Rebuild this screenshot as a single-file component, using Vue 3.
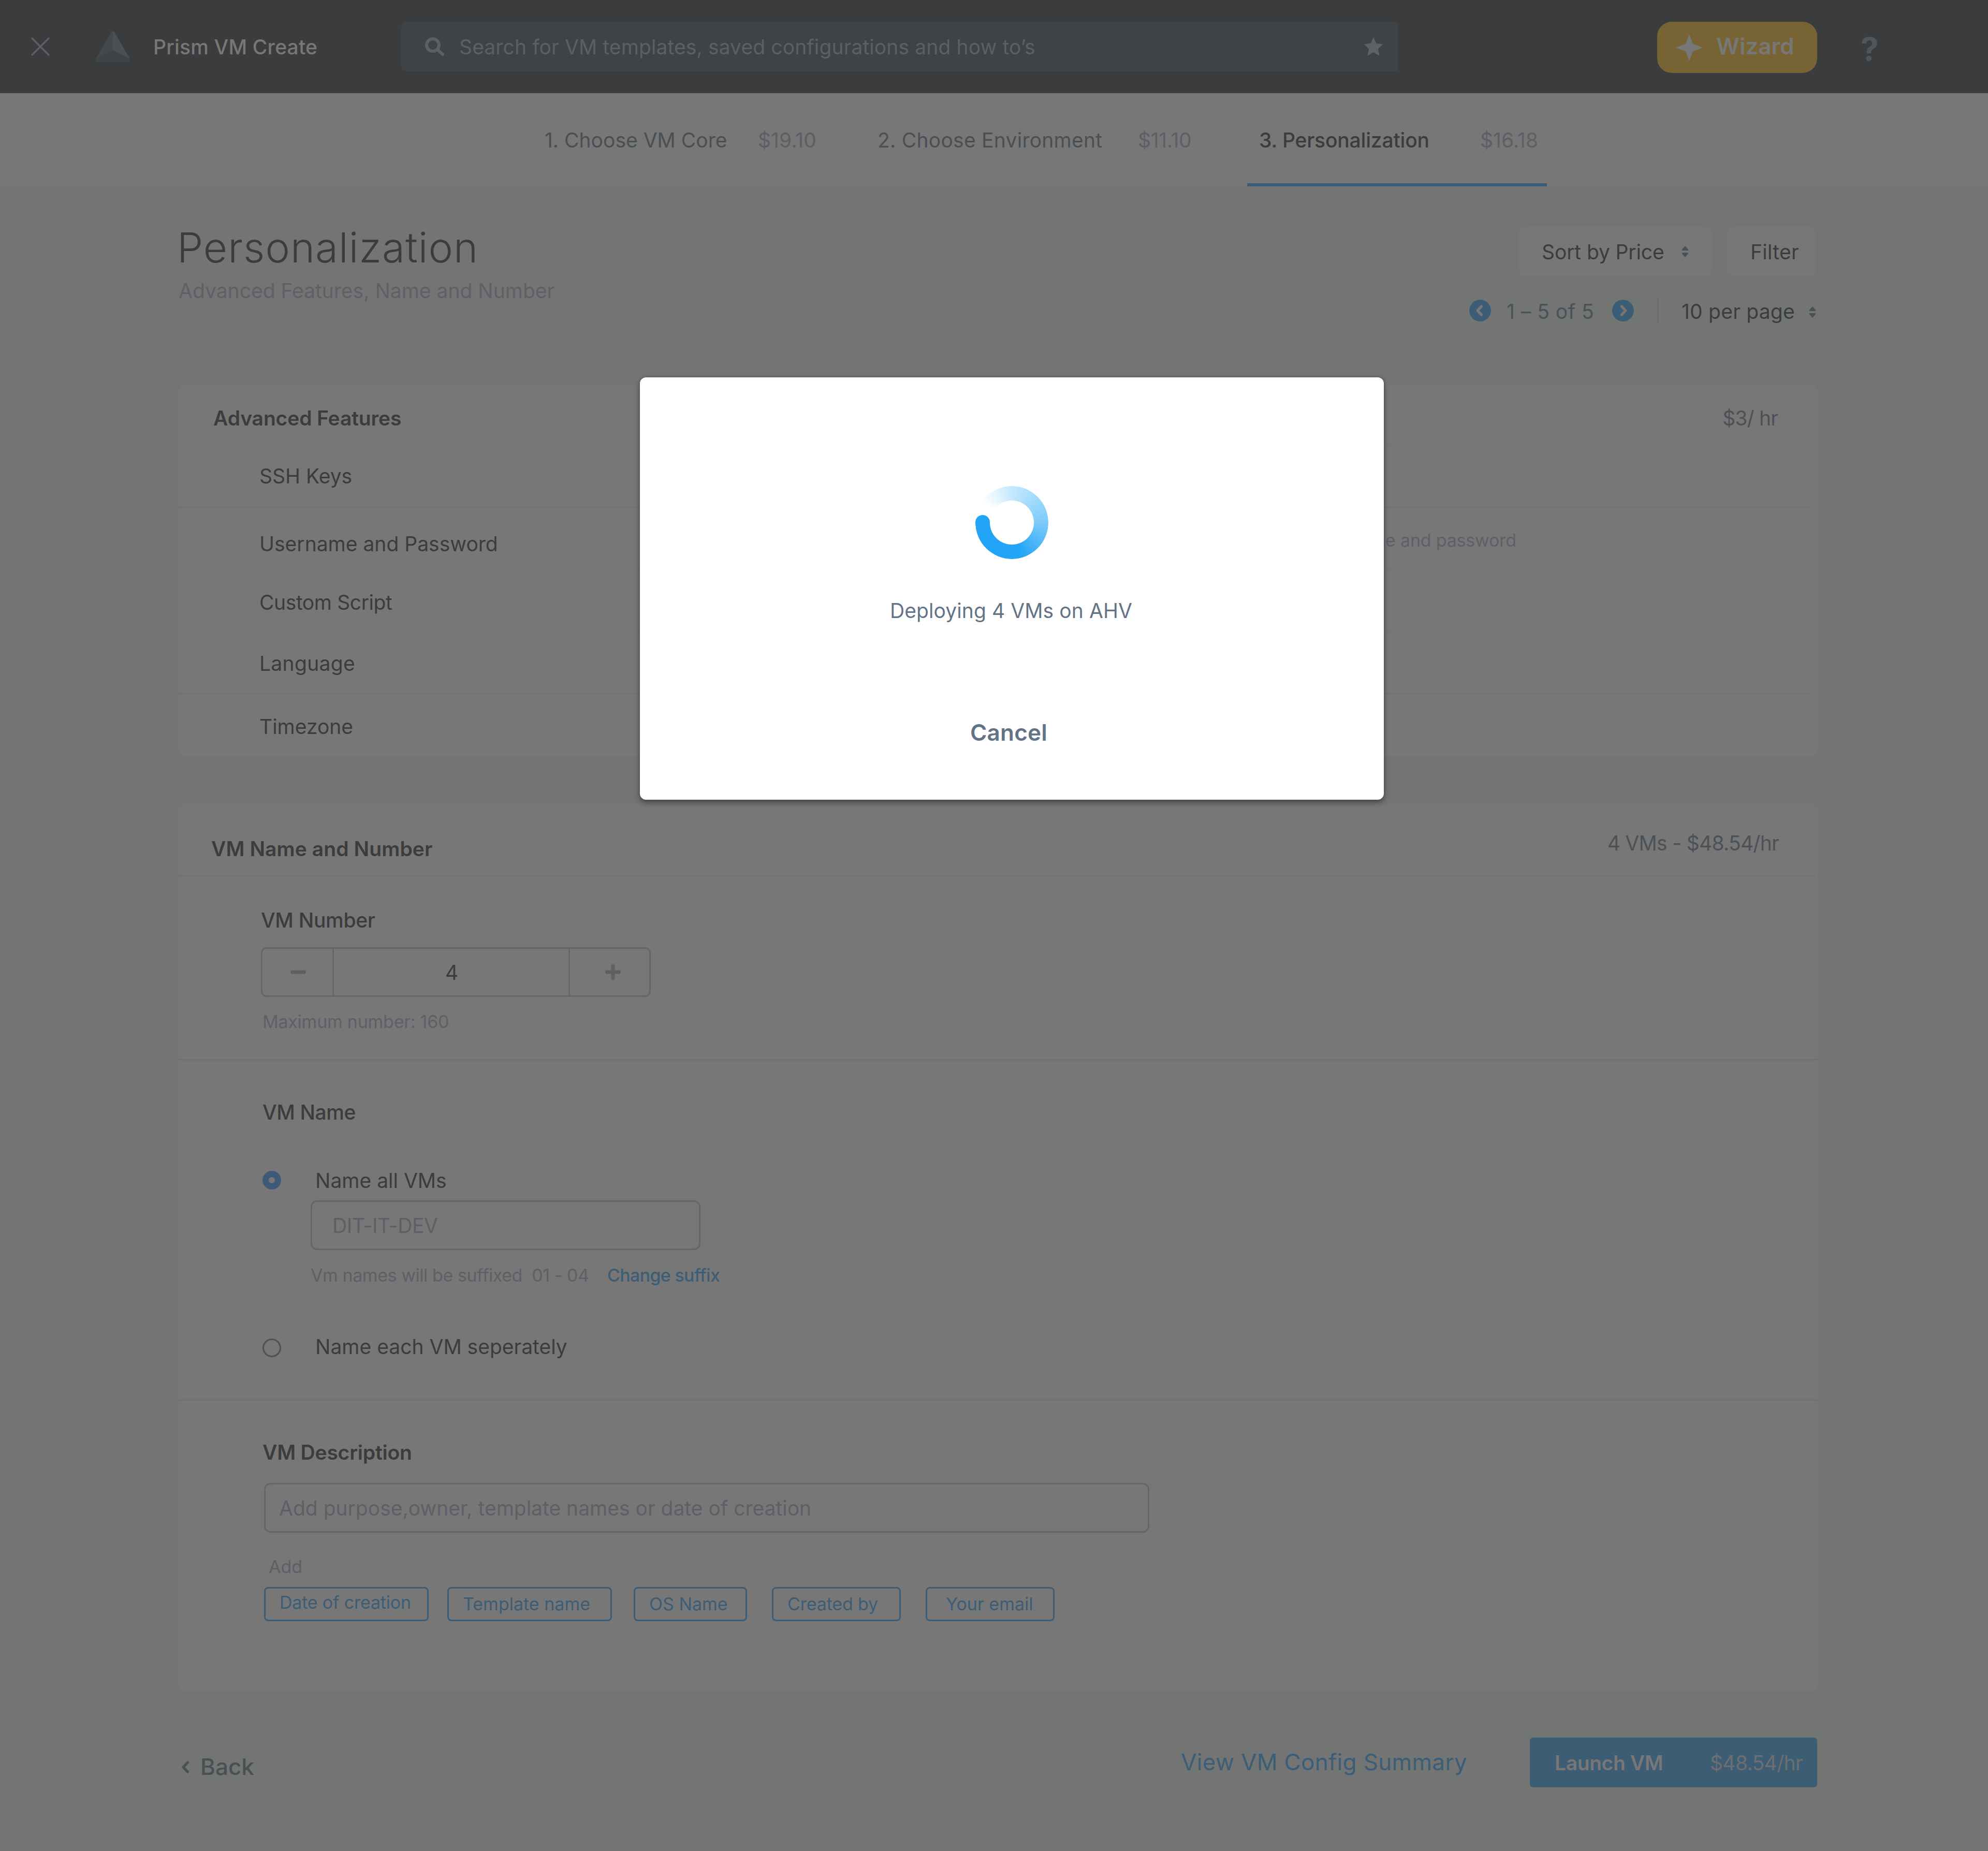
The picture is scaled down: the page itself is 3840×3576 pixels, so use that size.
<script setup>
const steps = [
  { label: '1. Choose VM Core', price: '$19.10', cls: 'tab-core' },
  { label: '2. Choose Environment', price: '$11.10', cls: 'tab-env' },
  { label: '3. Personalization', price: '$16.18', cls: 'tab-personal' },
]

const features = [
  { label: 'SSH Keys', cls: 'row-ssh' },
  { label: 'Username and Password', cls: 'row-user', note: 'username and password' },
  { label: 'Custom Script', cls: 'row-script' },
  { label: 'Language', cls: 'row-lang' },
  { label: 'Timezone', cls: 'row-zone' },
]

const suffixHint = 'Vm names will be suffixed  01 - 04'

const chips = [
  { label: 'Date of creation', cls: 'chip-date' },
  { label: 'Template name', cls: 'chip-template' },
  { label: 'OS Name', cls: 'chip-os' },
  { label: 'Created by', cls: 'chip-created' },
  { label: 'Your email', cls: 'chip-email' },
]
</script>

<template>
  <div class="page">
    <header class="topbar">
      <svg class="close" viewBox="0 0 36 36"><path d="M2 2L34 34M34 2L2 34" /></svg>
      <svg class="logo" viewBox="0 0 68 60">
        <path d="M34 0Q36 0 37 2L67 54L34 37Z" fill="#4a5056" />
        <path d="M34 0Q32 0 31 2L1 54L34 37Z" fill="#45494e" />
        <path d="M34 37L67 54Q69 59.500 64 59.500H4Q-1 59.500 1 54Z" fill="#3f4447" />
      </svg>
      <div class="product">Prism VM Create</div>
      <div class="search">
        <svg class="magnifier" viewBox="0 0 38 37">
          <circle cx="15" cy="15" r="12" />
          <path d="M24.500 24.500L34 33" />
        </svg>
        <span class="search-text">Search for VM templates, saved configurations and how to’s</span>
        <svg class="star" viewBox="0 0 38 36">
          <path d="M19 0L24.300 11.800L37.500 13.200L27.800 22.500L30.700 35.800L19 29L7.300 35.800L10.200 22.500L.5 13.200L13.700 11.800Z" />
        </svg>
      </div>
      <button class="wizard">
        <svg class="sparkle" viewBox="0 0 52 52">
          <path d="M26 0L33 18.500L52 26L33 33.500L26 52L19 33.500L0 26L19 18.500Z" />
        </svg>
        <span>Wizard</span>
      </button>
      <div class="help">?</div>
    </header>

    <nav class="tabs">
      <div v-for="s in steps" :key="s.label" class="tab" :class="s.cls">
        <span class="tab-label">{{ s.label }}</span>
        <span class="tab-price">{{ s.price }}</span>
      </div>
    </nav>

    <main class="content">
      <section class="heading">
        <div class="titles">
          <h1>Personalization</h1>
          <p>Advanced Features, Name and Number</p>
        </div>
        <div class="controls">
          <div class="buttons">
            <button class="btn sort">
              <span>Sort by Price</span>
              <svg class="updown" viewBox="0 0 12 22"><path d="M6 0L12 7V9H0V7ZM6 22L12 15V13H0V15Z" /></svg>
            </button>
            <button class="btn filter">Filter</button>
          </div>
          <div class="pager">
            <svg class="arrow" viewBox="0 0 42 42">
              <circle cx="21" cy="21" r="21" />
              <path d="M23.500 13L16 21L23.500 29" />
            </svg>
            <span class="range">1 – 5 of 5</span>
            <svg class="arrow" viewBox="0 0 42 42">
              <circle cx="21" cy="21" r="21" />
              <path d="M18.500 13L26 21L18.500 29" />
            </svg>
            <i class="divider"></i>
            <span class="per-page">10 per page</span>
            <svg class="updown" viewBox="0 0 12 22"><path d="M6 0L12 7V9H0V7ZM6 22L12 15V13H0V15Z" /></svg>
          </div>
        </div>
      </section>

      <section class="card features">
        <div class="card-head">
          <h2>Advanced Features</h2>
          <span class="rate">$3/ hr</span>
        </div>
        <div v-for="f in features" :key="f.label" class="row" :class="f.cls">
          <span>{{ f.label }}</span>
          <span v-if="f.note" class="note">{{ f.note }}</span>
        </div>
      </section>

      <section class="card naming">
        <div class="card-head">
          <h2>VM Name and Number</h2>
          <span class="rate">4 VMs - $48.54/hr</span>
        </div>

        <div class="block number">
          <h3>VM Number</h3>
          <div class="stepper">
            <div class="cell minus"><svg viewBox="0 0 30 30"><path d="M3.500 15H26.500" /></svg></div>
            <div class="cell value">4</div>
            <div class="cell plus"><svg viewBox="0 0 30 30"><path d="M3.500 15H26.500M15 3.500V26.500" /></svg></div>
          </div>
          <p class="hint">Maximum number: 160</p>
        </div>

        <div class="block names">
          <h3>VM Name</h3>
          <div class="option all">
            <i class="radio checked"></i>
            <span>Name all VMs</span>
          </div>
          <div class="field name-field">DIT-IT-DEV</div>
          <div class="suffix">
            <span class="suffix-text">{{ suffixHint }}</span>
            <a>Change suffix</a>
          </div>
          <div class="option each">
            <i class="radio"></i>
            <span>Name each VM seperately</span>
          </div>
        </div>

        <div class="block description">
          <h2>VM Description</h2>
          <div class="field desc-field">Add purpose,owner, template names or date of creation</div>
          <p class="add">Add</p>
          <div class="chips">
            <span v-for="c in chips" :key="c.label" class="chip" :class="c.cls">{{ c.label }}</span>
          </div>
        </div>
      </section>

      <footer class="footer">
        <a class="back">
          <svg viewBox="0 0 16 24"><path d="M12.500 3L4 12L12.500 21" /></svg>
          <span>Back</span>
        </a>
        <a class="summary">View VM Config Summary</a>
        <button class="launch">
          <span class="launch-label">Launch VM</span>
          <span class="launch-price">$48.54/hr</span>
        </button>
      </footer>
    </main>

    <div class="modal">
      <div class="spinner"><i class="cap"></i></div>
      <p class="status">Deploying 4 VMs on AHV</p>
      <a class="cancel">Cancel</a>
    </div>
  </div>
</template>

<style>
body {
  margin: 0;
  background: #727574;
}
</style>

<style scoped>
.page {
  position: relative;
  box-sizing: border-box;
  width: 3840px;
  height: 3576px;
  overflow: hidden;
  background: #727574;
  color: #3b3c3d;
  font-family: Inter, "Open Sans", sans-serif;
  font-size: 39px;
  line-height: 48px;
  white-space: pre;
}
.page * {
  box-sizing: border-box;
}
h1, h2, h3, p {
  margin: 0;
  font-size: inherit;
  font-weight: 400;
}
h2 {
  font-weight: 600;
}
h3 {
  font-weight: 500;
}
button {
  border: 0;
  padding: 0;
  font: inherit;
  color: inherit;
  text-align: left;
  white-space: pre;
}
svg {
  display: block;
  flex: none;
}
span, a, i {
  flex: none;
}

/* Top bar */
.topbar {
  display: flex;
  align-items: flex-start;
  height: 180px;
  background: #3b3c3e;
}
.close {
  width: 36px;
  height: 36px;
  margin: 72px 0 0 60px;
  fill: none;
  stroke: #5d5e66;
  stroke-width: 3.5;
  stroke-linecap: round;
}
.logo {
  width: 68px;
  height: 60px;
  margin: 60px 0 0 88px;
}
.product {
  width: 479px;
  margin: 67px 0 0 44px;
  font-weight: 500;
  letter-spacing: 0.19px;
  color: #777;
}
.search {
  display: flex;
  align-items: flex-start;
  width: 1925px;
  height: 96px;
  margin-top: 42px;
  border-radius: 10px 0 0 10px;
  background: #3f4346;
}
.magnifier {
  width: 38px;
  height: 37px;
  margin: 30px 0 0 46px;
  fill: none;
  stroke: #5b6065;
  stroke-width: 6;
  stroke-linecap: round;
}
.search-text {
  width: 1747px;
  margin: 25px 0 0 28px;
  letter-spacing: 0.11px;
  color: #5b6065;
}
.star {
  width: 38px;
  height: 36px;
  margin-top: 30px;
  fill: #5e6268;
}
.wizard {
  display: flex;
  align-items: flex-start;
  width: 309px;
  height: 99px;
  margin: 42px 0 0 501px;
  border-radius: 28px;
  background: #776333;
  color: #777;
  font-size: 44px;
  font-weight: 600;
}
.wizard span {
  margin: 23px 0 0 26px;
}
.sparkle {
  width: 52px;
  height: 52px;
  margin: 24px 0 0 36px;
  fill: #777;
}
.help {
  margin: 59px 0 0 84px;
  font-size: 62px;
  line-height: 72px;
  font-weight: 700;
  color: #50565a;
}

/* Steps */
.tabs {
  display: flex;
  height: 180px;
  padding-left: 1052px;
  background: #777;
  color: #4a4f54;
}
.tab {
  display: grid;
  padding-top: 67px;
}
.tab-core {
  width: 643px;
  grid-template-columns: 412px auto;
}
.tab-env {
  width: 714px;
  grid-template-columns: 503px auto;
  letter-spacing: 0.25px;
}
.tab-personal {
  width: 579px;
  grid-template-columns: 427px auto;
  padding-left: 23px;
  border-bottom: 6px solid #3c5d75;
  color: #3b3c3d;
  letter-spacing: -0.18px;
}
.tab-personal .tab-label {
  font-weight: 500;
}
.tab-price {
  color: #5d5e66;
  letter-spacing: 0.1px;
}
.tab-env .tab-price {
  letter-spacing: -0.3px;
}

/* Page heading */
.content {
  display: flex;
  flex-direction: column;
  width: 3168px;
  margin-left: 345px;
}
.heading {
  display: flex;
  justify-content: space-between;
  height: 384px;
}
.titles h1 {
  margin: 70px 0 0 -3px;
  font-size: 80px;
  line-height: 96px;
  font-weight: 300;
  letter-spacing: 1.05px;
}
.titles p {
  margin-top: 12px;
  color: #5f6067;
}
.controls {
  width: 675px;
  padding-top: 78px;
}
.buttons {
  display: flex;
  gap: 30px;
  margin-left: 96px;
}
.btn {
  display: flex;
  align-items: flex-start;
  height: 96px;
  padding-top: 25px;
  border-radius: 12px;
  background: #777;
}
.sort {
  width: 372px;
  padding-left: 44px;
  letter-spacing: -0.11px;
}
.sort span {
  width: 271px;
}
.sort .updown {
  margin-top: 12px;
}
.filter {
  width: 171px;
  padding-left: 45px;
  letter-spacing: 0.28px;
}
.updown {
  width: 12px;
  height: 22px;
  fill: #4a5056;
}
.pager {
  display: flex;
  align-items: flex-start;
  margin-top: 42px;
}
.arrow {
  width: 42px;
  height: 42px;
  margin-top: 3px;
  fill: #3c5d75;
}
.arrow path {
  fill: none;
  stroke: #777;
  stroke-width: 5;
  stroke-linecap: round;
  stroke-linejoin: round;
}
.range {
  width: 204px;
  margin: 2px 0 0 30px;
  color: #4c5157;
  letter-spacing: 0.47px;
}
.divider {
  width: 3px;
  height: 48px;
  margin-left: 45px;
  background: #696c6b;
}
.per-page {
  width: 247px;
  margin: 2px 0 0 44px;
  letter-spacing: 0.22px;
}
.pager .updown {
  margin-top: 16px;
}

/* Cards */
.card {
  display: flex;
  flex-direction: column;
  width: 3166px;
  border-radius: 12px;
  background: #777;
}
.card-head {
  display: flex;
  justify-content: space-between;
  align-items: flex-start;
  width: 3162px;
  border-bottom: 3px solid #747476;
}
.rate {
  color: #4c5157;
}
.features {
  height: 717px;
  margin-bottom: 92px;
}
.features .card-head {
  height: 120px;
  padding: 40px 73px 0 67px;
  border-color: #757576;
}
.features h2 {
  letter-spacing: -0.13px;
}
.features .rate {
  letter-spacing: -0.84px;
}
.row {
  display: flex;
  width: 3156px;
  height: 119px;
  padding-left: 156px;
  border-bottom: 3px solid #737375;
}
.row-ssh {
  padding-top: 32px;
}
.row-user {
  height: 118px;
  padding-top: 45px;
  border-bottom: 0;
  background: linear-gradient(#747476, #747476) 195px 100% / 2961px 3px no-repeat;
}
.row-user .note {
  width: 400px;
  margin: -7px 0 0 1567px;
  font-size: 34px;
  letter-spacing: -0.22px;
  color: #5d6167;
  text-align: right;
}
.row-script {
  height: 123px;
  padding-top: 40px;
  border-color: #747476;
  letter-spacing: -0.41px;
}
.row-lang {
  height: 120px;
  padding-top: 35px;
  letter-spacing: 0.32px;
}
.row-zone {
  padding-top: 38px;
  border-bottom: 0;
}

.naming {
  height: 1714px;
}
.naming .card-head {
  height: 141px;
  padding: 52px 71px 0 63px;
  border-color: #737375;
}
.naming .card-head h2 {
  margin-top: 11px;
  letter-spacing: 0.08px;
}
.naming .card-head .rate {
  letter-spacing: -0.72px;
}
.block {
  display: flex;
  flex-direction: column;
  align-items: flex-start;
  width: 3166px;
}
.number {
  height: 355px;
  padding: 60px 0 0 159px;
  border-bottom: 3px solid #717173;
}
.number h3 {
  letter-spacing: -0.3px;
}
.stepper {
  display: flex;
  width: 753px;
  height: 96px;
  margin-top: 28px;
  border: 3px solid #65656a;
  border-radius: 11px;
}
.cell {
  border-right: 3px solid #65656a;
}
.cell svg {
  width: 30px;
  height: 30px;
  fill: none;
  stroke: #5f5f61;
  stroke-width: 7;
  stroke-linecap: round;
}
.minus {
  width: 138px;
  padding: 30px 0 0 54px;
}
.value {
  width: 456px;
  padding: 22px 0 0 2px;
  text-align: center;
}
.plus {
  flex: 1;
  border-right: 0;
  padding: 30px 0 0 68px;
}
.hint {
  margin: 24px 0 0 3px;
  font-size: 34px;
  letter-spacing: -0.25px;
  color: #5d6167;
}
.names {
  height: 657px;
  padding: 76px 0 0 162px;
  border-bottom: 3px solid #717173;
}
.names h3 {
  letter-spacing: -0.4px;
}
.option {
  display: flex;
  align-items: flex-start;
}
.option span {
  margin-left: 66px;
}
.radio {
  width: 36px;
  height: 36px;
  margin-top: 5px;
  border: 3px solid #4c5259;
  border-radius: 50%;
}
.each .radio {
  margin-top: 8px;
}
.radio.checked {
  border: 12px solid #3d5a78;
}
.all {
  margin-top: 84px;
}
.each {
  margin-top: 90px;
}
.field {
  height: 96px;
  padding-top: 22px;
  border: 3px solid #65656a;
  border-radius: 12px;
  color: #5d5f66;
}
.name-field {
  width: 753px;
  margin: 14px 0 0 93px;
  padding-left: 39px;
  letter-spacing: -0.46px;
}
.suffix {
  display: flex;
  margin: 25px 0 0 93px;
  font-size: 34px;
}
.suffix-text {
  width: 573px;
  letter-spacing: -0.44px;
  color: #5d6067;
}
.suffix a {
  font-weight: 500;
  letter-spacing: -0.68px;
  color: #3c5d75;
}
.description {
  padding: 76px 0 0 162px;
}
.description h2 {
  letter-spacing: -0.2px;
}
.desc-field {
  width: 1710px;
  margin: 35px 0 0 3px;
  padding-left: 26px;
}
.add {
  margin: 42px 0 0 12px;
  font-size: 34px;
  color: #5d5f66;
}
.chips {
  display: flex;
  margin: 15px 0 0 3px;
}
.chip {
  width: 318px;
  height: 66px;
  padding: 6px 0 0 27px;
  border: 3px solid #3c5d75;
  border-radius: 8px;
  font-size: 34px;
  color: #3c5d75;
}
.chip-date {
  padding-top: 3px;
  letter-spacing: -0.2px;
}
.chip-template {
  margin-left: 36px;
}
.chip-os {
  width: 219px;
  margin-left: 42px;
}
.chip-created {
  width: 249px;
  margin-left: 48px;
  letter-spacing: -0.16px;
}
.chip-email {
  width: 249px;
  margin-left: 48px;
  padding-left: 36px;
}

/* Footer */
.footer {
  display: flex;
  align-items: flex-start;
}
.back {
  display: flex;
  align-items: flex-start;
  width: 1936px;
  padding: 122px 0 0 5px;
  font-size: 44px;
  font-weight: 500;
  color: #4a4f54;
}
.back svg {
  width: 16px;
  height: 24px;
  margin: 13px 21px 0 0;
  fill: none;
  stroke: #4a4f54;
  stroke-width: 5;
  stroke-linecap: round;
  stroke-linejoin: round;
}
.summary {
  width: 674px;
  margin-top: 113px;
  font-size: 44px;
  letter-spacing: 0.34px;
  color: #3c5d75;
}
.launch {
  display: flex;
  width: 555px;
  height: 96px;
  margin-top: 90px;
  padding: 25px 0 0 48px;
  border-radius: 6px;
  background: #3c5d73;
}
.launch-label {
  width: 300px;
  font-weight: 600;
  letter-spacing: -0.4px;
  color: #777;
}
.launch-price {
  letter-spacing: -0.65px;
  color: #6c6f72;
}

/* Progress dialog */
.modal {
  position: absolute;
  left: 1236px;
  top: 729px;
  display: flex;
  flex-direction: column;
  align-items: center;
  width: 1437px;
  height: 816px;
  padding-top: 210px;
  border-radius: 12px;
  background: #fff;
  box-shadow: 0 6px 12px rgba(0, 0, 0, 0.35), 0 0 6px rgba(0, 0, 0, 0.2);
  color: #627386;
}
.spinner {
  position: relative;
  width: 141px;
  height: 141px;
  border-radius: 50%;
  background: conic-gradient(#c4e8fd 0deg, #7dcbfa 90deg, #22a5f7 165deg, #22a5f7 270deg, transparent 270deg, transparent 305deg, #c4e8fd 360deg);
  -webkit-mask: radial-gradient(circle, transparent 42px, #000 43px);
  mask: radial-gradient(circle, transparent 42px, #000 43px);
}
.cap {
  position: absolute;
  left: 0;
  top: 56px;
  width: 28px;
  height: 28px;
  border-radius: 50%;
  background: #22a5f7;
}
.status {
  margin: 76px 3px 0 0;
  letter-spacing: 0.08px;
}
.cancel {
  margin: 187px 12px 0 0;
  font-size: 44px;
  font-weight: 600;
  letter-spacing: 0.2px;
}
</style>
